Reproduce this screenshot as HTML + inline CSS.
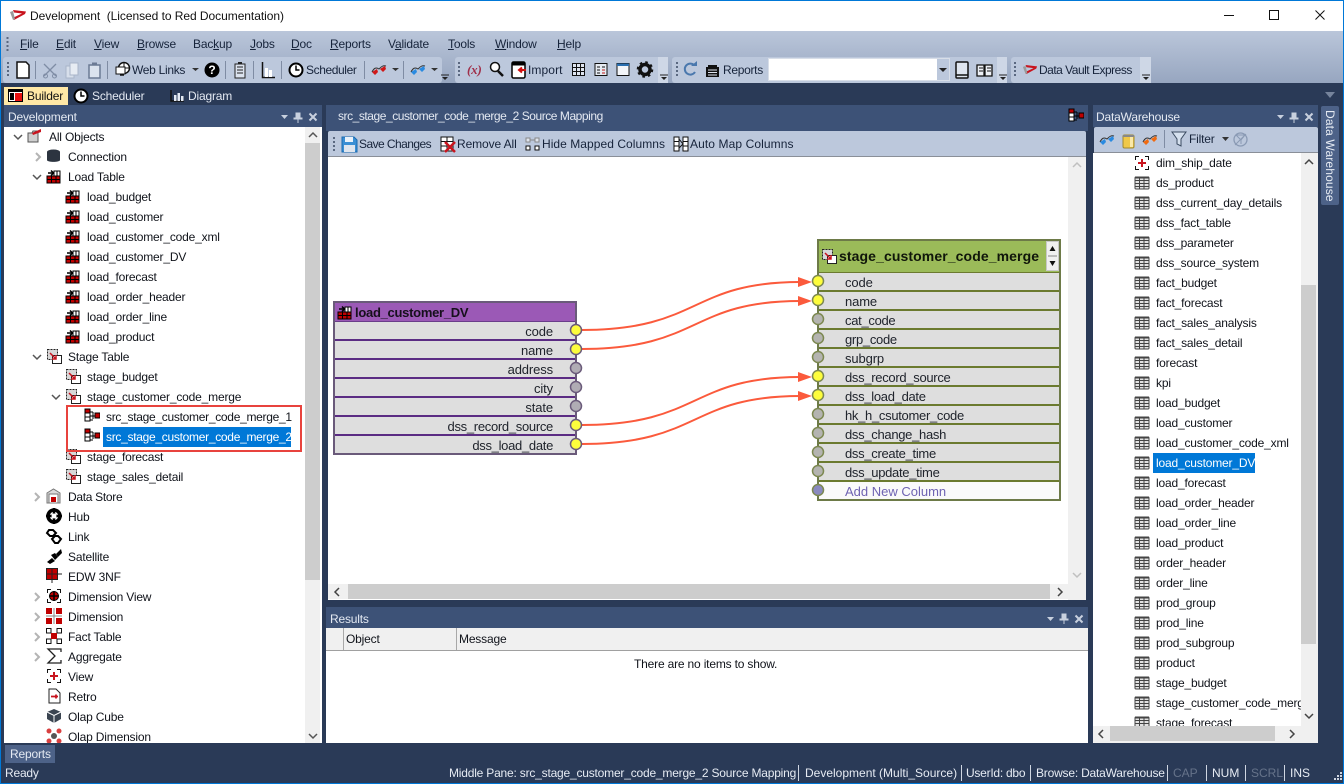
<!DOCTYPE html>
<html><head><meta charset="utf-8"><title>Development</title>
<style>
html,body{margin:0;padding:0;width:1344px;height:784px;overflow:hidden;background:#2a3a57}
body{position:relative;font:12px/20px "Liberation Sans",sans-serif;color:#10131a}
div{box-sizing:border-box}
.a{position:absolute}
.t{position:absolute;white-space:nowrap;line-height:20px;letter-spacing:-.18px}
.i{position:absolute;width:16px;height:16px;overflow:visible}
.w{color:#e4e9f2}
.m{color:#16233a}
.m u{text-decoration:underline}
.pill{position:absolute;background:#bcc8dc;border-radius:3px;top:57px;height:26px}
.st{color:#e6ebf3;top:763px;letter-spacing:-.2px}
.ss{position:absolute;top:765px;width:1px;height:16px;background:#cfd6e2}
.rt{position:absolute;white-space:nowrap;font-size:13px;line-height:19px;color:#20242c;letter-spacing:-.3px}
.p{letter-spacing:-.12px}
</style></head><body>
<svg width="0" height="0" style="position:absolute">
<defs>
<symbol id="load" viewBox="0 0 16 16"><rect x="2" y="8" width="13" height="7" fill="#c00000" stroke="#000"/><rect x="9" y="3" width="6" height="5" fill="#fff" stroke="#000"/><path d="M2 11.500H15M6.500 8V15M11 8V15M12 3V8" stroke="#000"/><path d="M3 5H8M6 2.500L8.500 5L6 7.500" fill="none" stroke="#000" stroke-width="1.500"/></symbol>
<symbol id="stage" viewBox="0 0 16 16"><rect x="1.500" y="1.500" width="10" height="10" fill="#d8d8d8" stroke="#222" stroke-dasharray="2 1"/><rect x="6.500" y="7.500" width="9" height="8" fill="#fff" stroke="#222"/><path d="M4 5L10 11M10 7V11H6" fill="none" stroke="#c8141e" stroke-width="1.500"/></symbol>
<symbol id="src" viewBox="0 0 16 16"><path d="M4 4H9M4 8H9M9 4V11M4 12H9M9 8H11" stroke="#000"/><rect x="1" y="1" width="5" height="4" fill="#c00000" stroke="#000"/><rect x="1" y="5" width="5" height="4" fill="#fff" stroke="#000"/><rect x="1" y="9" width="5" height="4" fill="#fff" stroke="#000"/><rect x="11" y="5" width="5" height="5" fill="#c00000" stroke="#000"/></symbol>
<symbol id="grid" viewBox="0 0 16 16"><rect x="1" y="2" width="14" height="12" fill="#e2e2e2" stroke="#444" rx="1"/><path d="M1 5.500H15M1 8.500H15M1 11.500H15M5.500 2V14M10 2V14" stroke="#444"/><path d="M1 2.500H15" stroke="#444" stroke-width="2"/></symbol>
<symbol id="view" viewBox="0 0 16 16"><path d="M5 1.500H1.500V5M11 1.500H14.500V5M5 14.500H1.500V11M11 14.500H14.500V11" fill="none" stroke="#111"/><path d="M8 4V12M4 8H12" stroke="#c8141e" stroke-width="2"/></symbol>
<symbol id="cv" viewBox="0 0 10 10"><path d="M1 3L5 7L9 3" fill="none" stroke="#555" stroke-width="1.500"/></symbol>
<symbol id="ch" viewBox="0 0 10 10"><path d="M3 1L7 5L3 9" fill="none" stroke="#b4b4b4" stroke-width="2"/></symbol>
<symbol id="pin" viewBox="0 0 10 12"><path d="M3 1H7V6H9V7H1V6H3ZM5 7V11" fill="#c8d0de" stroke="#c8d0de"/></symbol>
<symbol id="x" viewBox="0 0 10 10"><path d="M1.500 1.500L8.500 8.500M8.500 1.500L1.500 8.500" stroke="#c8d0de" stroke-width="2"/></symbol>
<symbol id="clock" viewBox="0 0 16 16"><circle cx="8" cy="8" r="6.500" fill="#fff" stroke="#000" stroke-width="2"/><path d="M8 3.500V8H11.500" fill="none" stroke="#000" stroke-width="1.500"/></symbol>
<symbol id="logo" viewBox="0 0 18 12"><path d="M4 1L17 2.500L16 5L5 11L3.500 9L13 4.500L5 3.500Z" fill="#c8141e"/><path d="M1 3L4 2L6 10L4 11Z" fill="#9a9a9a"/></symbol>
<symbol id="glr" viewBox="0 0 16 16"><path d="M1 10C3 6 5 5 8 7C10 5 12 3 15 4" fill="none" stroke="#333"/><path d="M1 10l5-3l1 3l-3 3zM9 7l5-3l1 3l-3 3z" fill="#d01818"/></symbol>
<symbol id="glb" viewBox="0 0 16 16"><path d="M1 10C3 6 5 5 8 7C10 5 12 3 15 4" fill="none" stroke="#333"/><path d="M1 10l5-3l1 3l-3 3zM9 7l5-3l1 3l-3 3z" fill="#2a8ae0"/></symbol>
<symbol id="glo" viewBox="0 0 16 16"><path d="M1 10C3 6 5 5 8 7C10 5 12 3 15 4" fill="none" stroke="#333"/><path d="M1 10l5-3l1 3l-3 3zM9 7l5-3l1 3l-3 3z" fill="#f06a10"/></symbol>
<symbol id="dn" viewBox="0 0 8 4"><path d="M0 0H8L4 4Z" fill="#222"/></symbol>
</defs>
</svg>

<!-- title bar -->
<div class="a" style="left:0;top:0;width:1344px;height:31px;background:#fff;border-top:1px solid #0078d7;border-left:1px solid #0078d7;border-right:1px solid #0078d7"></div>
<svg class="i" style="left:9px;top:9px;width:18px;height:12px"><use href="#logo"/></svg>
<div class="t" style="left:30px;top:6px;color:#111;letter-spacing:-.05px">Development&nbsp; (Licensed to Red Documentation)</div>
<svg class="a" style="left:1220px;top:5px" width="110" height="20"><path d="M4 10.500H14" stroke="#111"/><rect x="49.500" y="5.500" width="9" height="9" fill="none" stroke="#111"/><path d="M95.500 5.500L104.500 14.500M104.500 5.500L95.500 14.500" stroke="#111"/></svg>

<!-- chrome gradient -->
<div class="a" style="left:1px;top:31px;width:1342px;height:52px;background:linear-gradient(#bac6da,#97a6c0)"></div>
<svg class="a" style="left:6px;top:37px" width="3" height="15"><path d="M1.500 0V15" stroke="#5a6880" stroke-width="2" stroke-dasharray="2 2"/></svg>
<div class="t m" style="left:20px;top:34px"><u>F</u>ile</div>
<div class="t m" style="left:56px;top:34px"><u>E</u>dit</div>
<div class="t m" style="left:94px;top:34px"><u>V</u>iew</div>
<div class="t m" style="left:137px;top:34px"><u>B</u>rowse</div>
<div class="t m" style="left:193px;top:34px">Bac<u>k</u>up</div>
<div class="t m" style="left:250px;top:34px"><u>J</u>obs</div>
<div class="t m" style="left:291px;top:34px"><u>D</u>oc</div>
<div class="t m" style="left:330px;top:34px"><u>R</u>eports</div>
<div class="t m" style="left:388px;top:34px">V<u>a</u>lidate</div>
<div class="t m" style="left:448px;top:34px"><u>T</u>ools</div>
<div class="t m" style="left:495px;top:34px"><u>W</u>indow</div>
<div class="t m" style="left:557px;top:34px"><u>H</u>elp</div>

<!-- toolbars -->
<div class="pill" style="left:3px;width:439px"></div>
<div class="pill" style="left:455px;width:213px"></div>
<div class="a" style="left:658px;top:57px;width:10px;height:26px;background:#ced7e6"></div>
<div class="pill" style="left:672px;width:335px"></div>
<div class="a" style="left:997px;top:57px;width:10px;height:26px;background:#ced7e6"></div>
<div class="pill" style="left:1011px;width:140px"></div>
<div class="a" style="left:1140px;top:57px;width:11px;height:26px;background:#ced7e6"></div>
<svg class="a" style="left:0;top:57px" width="1344" height="26">
<path d="M8 5V21M459 5V21M677 5V21M1015 5V21" stroke="#5a6880" stroke-width="2" stroke-dasharray="2 2"/>
<path d="M441 18H449M660 18H668M999 18H1007M1142 18H1150" stroke="#222"/>
<path d="M442 20H448L445 23ZM661 20H667L664 23ZM1000 20H1006L1003 23ZM1143 20H1149L1146 23Z" fill="#222"/>
<path d="M35.500 4V22M107.500 4V22M225.500 4V22M253.500 4V22M281.500 4V22M364.500 4V22M403.500 4V22" stroke="#7f8ca3"/>
<path d="M17 5H26L29 8V21H17Z" fill="#fff" stroke="#111" stroke-width="1.500"/>
<path d="M44 7L56 19M56 7L44 19" stroke="#7f8da5" stroke-width="1.300"/><circle cx="45.500" cy="19" r="2" fill="none" stroke="#7f8da5"/><circle cx="54.500" cy="19" r="2" fill="none" stroke="#7f8da5"/>
<path d="M66 9H74V21H66Z" fill="#d7dfeb" stroke="#a9b5c9"/><path d="M70 6H78V18H70Z" fill="#e7ecf3" stroke="#a9b5c9"/>
<rect x="89" y="8" width="11" height="13" fill="#dbe3ee" stroke="#6b7a94" stroke-width="1.500"/><rect x="92" y="5.500" width="5" height="3" fill="#6b7a94"/>
<circle cx="124" cy="11" r="5.500" fill="#fff" stroke="#111" stroke-width="1.500"/><path d="M119 11H129M124 5.500V16.500" stroke="#111"/><rect x="116" y="10" width="9" height="7" fill="#fff" stroke="#111"/><path d="M120 18H124" stroke="#111" stroke-width="1.500"/>
<path d="M192 11H199L195.500 14Z" fill="#333"/>
<circle cx="212" cy="13" r="7.500" fill="#000"/>
<rect x="235" y="7" width="10" height="14" fill="#dce3ee" stroke="#222"/><path d="M237 10H243M237 13H243M237 16H243" stroke="#222"/><rect x="238" y="5" width="4" height="2" fill="#222"/>
<path d="M262.500 5V20.500H275" fill="none" stroke="#111" stroke-width="1.500"/><rect x="265" y="11" width="3" height="9" fill="#fff"/><rect x="269" y="13" width="3" height="7" fill="#fff"/>
<path d="M392 11H399L395.500 14ZM431 11H438L434.500 14Z" fill="#333"/>
<circle cx="495" cy="10" r="4.500" fill="#fff" stroke="#111" stroke-width="1.500"/><path d="M498 14L503 19" stroke="#111" stroke-width="2.500"/>
<rect x="512" y="5" width="13" height="16" rx="1.500" fill="#fff" stroke="#000" stroke-width="1.500"/><rect x="512" y="5" width="13" height="3.500" fill="#000"/><path d="M519 13H526M522 10.500L519 13L522 15.500" fill="none" stroke="#d01010" stroke-width="2"/>
<rect x="572.500" y="6.500" width="12" height="12" fill="#dfe5ef" stroke="#111"/><path d="M572 10.500H585M572 14.500H585M576.500 6V19M580.500 6V19" stroke="#111"/>
<rect x="595" y="6.500" width="12" height="12" fill="#e6ebf2" stroke="#111"/><path d="M597 10H600M597 13H600M597 16H600M602 10H605" stroke="#111"/><path d="M602 13H605M602 16H605" stroke="#c01818"/>
<rect x="617" y="6.500" width="12" height="12" fill="#f3f5f9" stroke="#111"/><rect x="617" y="6.500" width="12" height="2.500" fill="#2a6fb0"/>
<circle cx="645" cy="12.500" r="5" fill="none" stroke="#111" stroke-width="3.500"/><circle cx="645" cy="12.500" r="7" fill="none" stroke="#111" stroke-width="2.500" stroke-dasharray="2.500 3"/>
<path d="M694 8A5.500 5.500 0 1 0 695 15" fill="none" stroke="#4a78ad" stroke-width="2"/><path d="M691 9H697V4Z" fill="#4a78ad"/>
<rect x="706" y="10" width="13" height="10" fill="#111"/><path d="M708 13H717M708 15.500H717M708 18H717" stroke="#dfe5ef"/><rect x="708" y="8" width="9" height="2" fill="#111"/>
<rect x="956" y="5" width="12" height="16" rx="1" fill="#dfe5ef" stroke="#111" stroke-width="1.500"/><path d="M956 18H968" stroke="#111" stroke-width="1.500"/>
<path d="M977 8H984V19H977ZM985 8H992V19H985Z" fill="#eef1f6" stroke="#111" stroke-width="1.300"/><path d="M979 11H983M979 14H983M987 11H991M987 14H991" stroke="#111"/>
</svg>
<div class="a" style="left:208px;top:60px;width:8px;text-align:center;color:#fff;font:bold 12px/20px 'Liberation Sans',sans-serif">?</div>
<svg class="i" style="left:371px;top:62px"><use href="#glr"/></svg>
<svg class="i" style="left:410px;top:62px"><use href="#glb"/></svg>
<div class="t" style="left:467px;top:60px;color:#a0304a;font:italic bold 13px/20px 'Liberation Serif',serif">(x)</div>
<div class="t m" style="left:132px;top:60px;letter-spacing:-.3px">Web Links</div>
<div class="t m" style="left:306px;top:60px;letter-spacing:-.4px">Scheduler</div>
<svg class="i" style="left:288px;top:62px"><use href="#clock"/></svg>
<div class="t m" style="left:528px;top:60px;letter-spacing:.1px">Import</div>
<div class="t m" style="left:723px;top:60px;letter-spacing:-.3px">Reports</div>
<div class="a" style="left:768px;top:58px;width:182px;height:23px;background:#fff;border:1px solid #d8dee8"></div>
<div class="a" style="left:937px;top:59px;width:12px;height:21px;background:#bcc8dc"></div>
<svg class="a" style="left:939px;top:68px" width="8" height="4"><use href="#dn"/></svg>
<svg class="i" style="left:1022px;top:64px;width:16px;height:11px"><use href="#logo"/></svg>
<div class="t m" style="left:1039px;top:60px;letter-spacing:-.5px">Data Vault Express</div>

<!-- tab strip -->
<div class="a" style="left:4px;top:87px;width:64px;height:18px;background:#ffe8a6"></div>
<svg class="a" style="left:8px;top:89px" width="15" height="13"><rect x=".5" y=".5" width="14" height="12" fill="#fff" stroke="#000"/><rect x="0" y="0" width="15" height="3" fill="#000"/><rect x="2" y="4" width="4" height="7" fill="#000"/><rect x="7" y="4" width="7" height="8" fill="#e81010"/></svg>
<div class="t" style="left:27px;top:86px;color:#111">Builder</div>
<svg class="i" style="left:73px;top:88px"><use href="#clock"/></svg>
<div class="t w" style="left:92px;top:86px">Scheduler</div>
<svg class="a" style="left:170px;top:90px" width="14" height="12"><path d="M1 0V11H14" fill="none" stroke="#111" stroke-width="1.500"/><rect x="4" y="5" width="2.500" height="6" fill="#e4e9f2"/><rect x="7.500" y="3" width="2.500" height="8" fill="#e4e9f2"/><rect x="11" y="6" width="2.500" height="5" fill="#e4e9f2"/></svg>
<div class="t w" style="left:188px;top:86px">Diagram</div>
<svg class="a" style="left:1325px;top:92px" width="10" height="6"><path d="M0 0H10L5 6Z" fill="#76849c"/></svg>

<!-- left panel -->
<div class="a" style="left:4px;top:105px;width:318px;height:22px;background:#3d5277"></div>
<div class="t w" style="left:8px;top:107px">Development</div>
<svg class="a" style="left:281px;top:115px" width="7" height="4"><path d="M0 0H7L3.500 4Z" fill="#c8d0de"/></svg>
<svg class="a" style="left:293px;top:112px" width="10" height="12"><use href="#pin"/></svg>
<svg class="a" style="left:308px;top:112px" width="10" height="10"><use href="#x"/></svg>
<div class="a" style="left:4px;top:127px;width:318px;height:616px;background:#fff"></div>
<div class="a" style="left:305px;top:127px;width:15px;height:616px;background:#f0f0f0"></div>
<div class="a" style="left:305px;top:143px;width:15px;height:437px;background:#cdcdcd"></div>
<svg class="a" style="left:308px;top:131px" width="10" height="8"><path d="M1 6L5 2L9 6" fill="none" stroke="#555" stroke-width="1.500"/></svg>
<svg class="a" style="left:308px;top:732px" width="10" height="8"><path d="M1 2L5 6L9 2" fill="none" stroke="#555" stroke-width="1.500"/></svg>

<div class="a" style="left:0;top:127px;width:305px;height:616px;overflow:hidden">
<svg class="a" style="left:13px;top:5px" width="10" height="10"><use href="#cv"/></svg>
<svg class="i" style="left:27px;top:1px"><path d="M1 5H5L6 3H11V14H1Z" fill="#cfcfcf" stroke="#555"/><path d="M5 5L14 1V4L6 7Z" fill="#c8141e"/></svg>
<div class="t" style="left:49px;top:0">All Objects</div>

<svg class="a" style="left:33px;top:25px" width="10" height="10"><use href="#ch"/></svg>
<svg class="i" style="left:46px;top:21px"><ellipse cx="7.500" cy="4" rx="6.500" ry="2.500" fill="#2c3440"/><path d="M1 4V12C1 14.500 14 14.500 14 12V4" fill="#2c3440"/></svg>
<div class="t" style="left:68px;top:20px">Connection</div>

<svg class="a" style="left:32px;top:45px" width="10" height="10"><use href="#cv"/></svg>
<svg class="i" style="left:45px;top:41px"><use href="#load"/></svg>
<div class="t" style="left:68px;top:40px">Load Table</div>

<svg class="i" style="left:64px;top:61px"><use href="#load"/></svg><div class="t" style="left:87px;top:60px">load_budget</div>
<svg class="i" style="left:64px;top:81px"><use href="#load"/></svg><div class="t" style="left:87px;top:80px">load_customer</div>
<svg class="i" style="left:64px;top:101px"><use href="#load"/></svg><div class="t" style="left:87px;top:100px">load_customer_code_xml</div>
<svg class="i" style="left:64px;top:121px"><use href="#load"/></svg><div class="t" style="left:87px;top:120px">load_customer_DV</div>
<svg class="i" style="left:64px;top:141px"><use href="#load"/></svg><div class="t" style="left:87px;top:140px">load_forecast</div>
<svg class="i" style="left:64px;top:161px"><use href="#load"/></svg><div class="t" style="left:87px;top:160px">load_order_header</div>
<svg class="i" style="left:64px;top:181px"><use href="#load"/></svg><div class="t" style="left:87px;top:180px">load_order_line</div>
<svg class="i" style="left:64px;top:201px"><use href="#load"/></svg><div class="t" style="left:87px;top:200px">load_product</div>

<svg class="a" style="left:32px;top:225px" width="10" height="10"><use href="#cv"/></svg>
<svg class="i" style="left:46px;top:221px"><use href="#stage"/></svg>
<div class="t" style="left:68px;top:220px">Stage Table</div>
<svg class="i" style="left:65px;top:241px"><use href="#stage"/></svg><div class="t" style="left:87px;top:240px">stage_budget</div>
<svg class="a" style="left:51px;top:265px" width="10" height="10"><use href="#cv"/></svg>
<svg class="i" style="left:65px;top:261px"><use href="#stage"/></svg><div class="t" style="left:87px;top:260px">stage_customer_code_merge</div>

<svg class="i" style="left:84px;top:281px"><use href="#src"/></svg><div class="t" style="left:106px;top:280px;letter-spacing:-.29px">src_stage_customer_code_merge_1</div>
<div class="a" style="left:103px;top:300px;width:188px;height:20px;background:#0078d7"></div>
<svg class="i" style="left:84px;top:301px"><use href="#src"/></svg><div class="t" style="left:106px;top:300px;color:#fff;letter-spacing:-.29px">src_stage_customer_code_merge_2</div>

<svg class="i" style="left:65px;top:321px"><use href="#stage"/></svg><div class="t" style="left:87px;top:320px">stage_forecast</div>
<svg class="i" style="left:65px;top:341px"><use href="#stage"/></svg><div class="t" style="left:87px;top:340px">stage_sales_detail</div>

<svg class="a" style="left:32px;top:365px" width="10" height="10"><use href="#ch"/></svg>
<svg class="i" style="left:46px;top:361px"><path d="M1 5L7.500 1L14 5V15H1Z" fill="#dadada" stroke="#777"/><rect x="3" y="6" width="9" height="9" fill="#fff" stroke="#777"/><rect x="5" y="9" width="5" height="5" fill="#c00000"/></svg>
<div class="t" style="left:68px;top:360px;letter-spacing:-.3px">Data Store</div>

<svg class="i" style="left:46px;top:381px"><circle cx="8" cy="8" r="6" fill="none" stroke="#000" stroke-width="3.500"/><path d="M8 0V16M0 8H16" stroke="#000" stroke-width="2.500"/><circle cx="8" cy="8" r="2.500" fill="#fff"/></svg>
<div class="t" style="left:68px;top:380px">Hub</div>

<svg class="i" style="left:46px;top:401px"><path d="M3 2H7L10 5L7 8H4L1 5ZM9 8H12L15 11L12 15H9L6 11Z" fill="none" stroke="#000" stroke-width="2"/></svg>
<div class="t" style="left:68px;top:400px">Link</div>

<svg class="i" style="left:46px;top:421px"><path d="M1 14L6 10L9 13L4 16ZM10 6L15 1L16 5L12 9Z" fill="#000"/><path d="M5 7L9 5L12 9L9 12Z" fill="#000"/></svg>
<div class="t" style="left:68px;top:420px">Satellite</div>

<svg class="i" style="left:46px;top:441px"><rect x="0.500" y="0.500" width="11" height="11" fill="#c00000" stroke="#222"/><path d="M6 0V15M0 6H16" stroke="#222"/></svg>
<div class="t" style="left:68px;top:440px">EDW 3NF</div>

<svg class="a" style="left:32px;top:465px" width="10" height="10"><use href="#ch"/></svg>
<svg class="i" style="left:46px;top:461px"><path d="M5 1.500H1.500V5M11 1.500H14.500V5M5 14.500H1.500V11M11 14.500H14.500V11" fill="none" stroke="#111"/><circle cx="8" cy="8" r="4.500" fill="#c00000" stroke="#000"/><path d="M8 3V13M3 8H13" stroke="#000" stroke-width="1.500"/></svg>
<div class="t" style="left:68px;top:460px">Dimension View</div>

<svg class="a" style="left:32px;top:485px" width="10" height="10"><use href="#ch"/></svg>
<svg class="i" style="left:46px;top:481px"><rect x="0" y="0" width="6" height="6" fill="#c00000"/><rect x="10" y="0" width="6" height="6" fill="#c00000"/><rect x="0" y="10" width="6" height="6" fill="#c00000"/><rect x="10" y="10" width="6" height="6" fill="#c00000"/><path d="M8 0V16M0 8H16" stroke="#888"/></svg>
<div class="t" style="left:68px;top:480px">Dimension</div>

<svg class="a" style="left:32px;top:505px" width="10" height="10"><use href="#ch"/></svg>
<svg class="i" style="left:46px;top:501px"><path d="M3 3L13 13M13 3L3 13" stroke="#222"/><rect x=".5" y=".5" width="4.500" height="4.500" fill="#fff" stroke="#111"/><rect x="11" y=".5" width="4.500" height="4.500" fill="#fff" stroke="#111"/><rect x=".5" y="11" width="4.500" height="4.500" fill="#fff" stroke="#111"/><rect x="11" y="11" width="4.500" height="4.500" fill="#fff" stroke="#111"/><rect x="5" y="5" width="6" height="6" fill="#c00000"/></svg>
<div class="t" style="left:68px;top:500px">Fact Table</div>

<svg class="a" style="left:32px;top:525px" width="10" height="10"><use href="#ch"/></svg>
<svg class="i" style="left:47px;top:521px"><path d="M14 4V1H1L8 8L1 15H14V12" fill="none" stroke="#222" stroke-width="1.300"/></svg>
<div class="t" style="left:68px;top:520px">Aggregate</div>

<svg class="i" style="left:46px;top:541px"><use href="#view"/></svg>
<div class="t" style="left:68px;top:540px">View</div>

<svg class="i" style="left:46px;top:561px"><path d="M3 1H10L14 5V15H3Z" fill="#fff" stroke="#222"/><path d="M5 8.500H12M10 6.500V10.500" stroke="#c8141e" stroke-width="1.800"/></svg>
<div class="t" style="left:68px;top:560px">Retro</div>

<svg class="i" style="left:46px;top:581px"><path d="M8 1L15 4V11L8 15L1 11V4Z" fill="#3a4450"/><path d="M1 4L8 7.500L15 4M8 7.500V15" fill="none" stroke="#fff"/></svg>
<div class="t" style="left:68px;top:580px">Olap Cube</div>

<svg class="i" style="left:46px;top:601px"><circle cx="3" cy="3" r="2.500" fill="#d84040"/><circle cx="13" cy="3" r="2.500" fill="#d84040"/><circle cx="3" cy="13" r="2.500" fill="#d84040"/><circle cx="13" cy="13" r="2.500" fill="#d84040"/><circle cx="8" cy="8" r="3" fill="#555"/></svg>
<div class="t" style="left:68px;top:600px">Olap Dimension</div>
</div>
<div class="a" style="left:66px;top:405px;width:236px;height:47px;border:2px solid #e8433d"></div>

<!-- middle panel -->
<div class="a" style="left:326px;top:105px;width:762px;height:26px;background:#3d5277"></div>
<div class="t w" style="left:338px;top:106px;letter-spacing:-.45px">src_stage_customer_code_merge_2 Source Mapping</div>
<svg class="i" style="left:1068px;top:108px"><use href="#src"/></svg>
<div class="a" style="left:328px;top:131px;width:758px;height:26px;background:#bcc8dc;border-bottom:1px solid #8a8f98;border-radius:2px 2px 0 0"></div>
<svg class="a" style="left:332px;top:136px" width="480" height="17">
<path d="M2 1V16" stroke="#5a6880" stroke-width="2" stroke-dasharray="2 2"/>
<path d="M10 1H22L25 4V16H10Z" fill="#3b8fd4" stroke="#1a6ab0"/><rect x="13" y="1" width="8" height="5" fill="#eaf2fa"/><rect x="12" y="9" width="11" height="7" fill="#dfe5ee"/>
<rect x="109" y="1" width="12" height="14" fill="#fff" stroke="#111"/><path d="M109 5.500H121M109 10H121M115 1V15" stroke="#111"/><path d="M113 6L123 16M123 6L113 16" stroke="#c8141e" stroke-width="2.500"/>
<rect x="194" y="2" width="4" height="4" fill="#dfe5ee" stroke="#888"/><rect x="203" y="2" width="4" height="4" fill="#dfe5ee" stroke="#888"/><path d="M198 4H203" stroke="#888"/><rect x="194" y="10" width="4" height="4" fill="#fff" stroke="#111"/><rect x="203" y="10" width="4" height="4" fill="#fff" stroke="#111"/>
<rect x="342" y="1" width="5" height="14" fill="#fff" stroke="#111"/><rect x="351" y="1" width="5" height="14" fill="#fff" stroke="#111"/><path d="M342 5.500H347M342 10H347M351 5.500H356M351 10H356M347 3L351 8M347 12L351 8" stroke="#111"/>
</svg>
<div class="t m" style="left:359px;top:134px;letter-spacing:-.55px">Save Changes</div>
<div class="t m" style="left:457px;top:134px;letter-spacing:-.1px">Remove All</div>
<div class="t m" style="left:542px;top:134px;letter-spacing:.05px">Hide Mapped Columns</div>
<div class="t m" style="left:690px;top:134px;letter-spacing:.1px">Auto Map Columns</div>

<div class="a" style="left:328px;top:157px;width:758px;height:443px;background:#fff"></div>
<div class="a" style="left:1068px;top:157px;width:18px;height:443px;background:#f0f0f0"></div>
<svg class="a" style="left:1072px;top:161px" width="10" height="8"><path d="M1 6L5 2L9 6" fill="none" stroke="#c0c0c0" stroke-width="1.500"/></svg>
<svg class="a" style="left:1072px;top:571px" width="10" height="8"><path d="M1 2L5 6L9 2" fill="none" stroke="#c0c0c0" stroke-width="1.500"/></svg>
<div class="a" style="left:328px;top:584px;width:758px;height:15px;background:#f0f0f0"></div>
<div class="a" style="left:348px;top:584px;width:702px;height:15px;background:#cdcdcd"></div>
<svg class="a" style="left:333px;top:587px" width="8" height="10"><path d="M6 1L2 5L6 9" fill="none" stroke="#444" stroke-width="1.500"/></svg>
<svg class="a" style="left:1056px;top:587px" width="8" height="10"><path d="M2 1L6 5L2 9" fill="none" stroke="#444" stroke-width="1.500"/></svg>

<!-- left table -->
<div class="a" style="left:333px;top:301px;width:244px;height:154px;background:#dedede;border:2px solid #6a5a7a"></div>
<div class="a" style="left:335px;top:303px;width:240px;height:18px;background:#9b59b6"></div>
<svg class="i" style="left:336px;top:304px"><use href="#load"/></svg>
<div class="t" style="left:355px;top:303px;font-size:13px;font-weight:bold;line-height:20px;color:#16101c;letter-spacing:-.28px">load_customer_DV</div>
<div class="a" style="left:335px;top:321px;width:240px;height:1px;background:#6a3d8a"></div>
<div class="a" style="left:335px;top:339px;width:240px;height:2px;background:#5b2c83"></div>
<div class="a" style="left:335px;top:358px;width:240px;height:2px;background:#5b2c83"></div>
<div class="a" style="left:335px;top:377px;width:240px;height:2px;background:#5b2c83"></div>
<div class="a" style="left:335px;top:396px;width:240px;height:2px;background:#5b2c83"></div>
<div class="a" style="left:335px;top:415px;width:240px;height:2px;background:#5b2c83"></div>
<div class="a" style="left:335px;top:434px;width:240px;height:2px;background:#5b2c83"></div>
<div class="rt p" style="right:791px;top:322px">code</div>
<div class="rt p" style="right:791px;top:341px">name</div>
<div class="rt p" style="right:791px;top:360px">address</div>
<div class="rt p" style="right:791px;top:379px">city</div>
<div class="rt p" style="right:791px;top:398px">state</div>
<div class="rt" style="right:791px;top:417px">dss_record_source</div>
<div class="rt" style="right:791px;top:436px">dss_load_date</div>

<!-- right table -->
<div class="a" style="left:817px;top:239px;width:244px;height:262px;background:#dedede;border:2px solid #6d7a48"></div>
<div class="a" style="left:819px;top:241px;width:240px;height:31px;background:#9bbb59"></div>
<svg class="i" style="left:821px;top:248px"><use href="#stage"/></svg>
<div class="t" style="left:839px;top:246px;font-size:14px;font-weight:bold;color:#10160a;letter-spacing:.1px">stage_customer_code_merge</div>
<div class="a" style="left:1046px;top:241px;width:13px;height:30px;background:#f0f0f0;border:1px solid #c8c8c8"></div>
<svg class="a" style="left:1048px;top:243px" width="9" height="26"><path d="M4.500 3L7.500 8H1.500Z" fill="#111"/><path d="M0 13H9" stroke="#888"/><path d="M4.500 23L7.500 18H1.500Z" fill="#111"/></svg>
<div class="a" style="left:819px;top:272px;width:240px;height:1px;background:#6b7a2f"></div>
<div class="a" style="left:819px;top:290px;width:240px;height:2px;background:#6b7a2f"></div>
<div class="a" style="left:819px;top:309px;width:240px;height:2px;background:#6b7a2f"></div>
<div class="a" style="left:819px;top:328px;width:240px;height:2px;background:#6b7a2f"></div>
<div class="a" style="left:819px;top:347px;width:240px;height:2px;background:#6b7a2f"></div>
<div class="a" style="left:819px;top:366px;width:240px;height:2px;background:#6b7a2f"></div>
<div class="a" style="left:819px;top:385px;width:240px;height:2px;background:#6b7a2f"></div>
<div class="a" style="left:819px;top:404px;width:240px;height:2px;background:#6b7a2f"></div>
<div class="a" style="left:819px;top:423px;width:240px;height:2px;background:#6b7a2f"></div>
<div class="a" style="left:819px;top:442px;width:240px;height:2px;background:#6b7a2f"></div>
<div class="a" style="left:819px;top:461px;width:240px;height:2px;background:#6b7a2f"></div>
<div class="a" style="left:819px;top:480px;width:240px;height:2px;background:#6b7a2f"></div>
<div class="a" style="left:819px;top:482px;width:240px;height:17px;background:#fafafa"></div>
<div class="rt p" style="left:845px;top:273px">code</div>
<div class="rt p" style="left:845px;top:292px">name</div>
<div class="rt" style="left:845px;top:311px">cat_code</div>
<div class="rt" style="left:845px;top:330px">grp_code</div>
<div class="rt p" style="left:845px;top:349px">subgrp</div>
<div class="rt" style="left:845px;top:368px">dss_record_source</div>
<div class="rt" style="left:845px;top:387px">dss_load_date</div>
<div class="rt" style="left:845px;top:406px">hk_h_csutomer_code</div>
<div class="rt" style="left:845px;top:425px">dss_change_hash</div>
<div class="rt" style="left:845px;top:444px">dss_create_time</div>
<div class="rt" style="left:845px;top:463px">dss_update_time</div>
<div class="rt" style="left:845px;top:482px;color:#6f63b3;letter-spacing:0">Add New Column</div>

<!-- connectors -->
<svg class="a" style="left:0;top:0;pointer-events:none" width="1344" height="784">
<g fill="none" stroke="#fb5a3c" stroke-width="2">
<path d="M582 330C700 330 690 282 800 282"/>
<path d="M582 349C700 349 690 301 800 301"/>
<path d="M582 425C700 425 690 377 800 377"/>
<path d="M582 444C700 444 690 396 800 396"/>
</g>
<g fill="#fb5a3c"><path d="M798 277L812 282L798 287Z"/><path d="M798 296L812 301L798 306Z"/><path d="M798 372L812 377L798 382Z"/><path d="M798 391L812 396L798 401Z"/></g>
<g stroke-width="1.500">
<g fill="#fdfd3c" stroke="#6a5a7a"><circle cx="576" cy="330" r="5.500"/><circle cx="576" cy="349" r="5.500"/><circle cx="576" cy="425" r="5.500"/><circle cx="576" cy="444" r="5.500"/></g>
<g fill="#b0acb4" stroke="#6a5a7a"><circle cx="576" cy="368" r="5.500"/><circle cx="576" cy="387" r="5.500"/><circle cx="576" cy="406" r="5.500"/></g>
<g fill="#fdfd3c" stroke="#7c8850"><circle cx="818" cy="281" r="5.500"/><circle cx="818" cy="300" r="5.500"/><circle cx="818" cy="376" r="5.500"/><circle cx="818" cy="395" r="5.500"/></g>
<g fill="#b4b4b0" stroke="#7c8850"><circle cx="818" cy="319" r="5.500"/><circle cx="818" cy="338" r="5.500"/><circle cx="818" cy="357" r="5.500"/><circle cx="818" cy="414" r="5.500"/><circle cx="818" cy="433" r="5.500"/><circle cx="818" cy="452" r="5.500"/><circle cx="818" cy="471" r="5.500"/></g>
<circle cx="818" cy="490" r="5.500" fill="#8a8ac0" stroke="#7c8850"/>
</g>
</svg>

<!-- results -->
<div class="a" style="left:326px;top:607px;width:762px;height:21px;background:#3d5277"></div>
<div class="t w" style="left:330px;top:609px">Results</div>
<svg class="a" style="left:1047px;top:617px" width="7" height="4"><path d="M0 0H7L3.500 4Z" fill="#c8d0de"/></svg>
<svg class="a" style="left:1059px;top:613px" width="10" height="12"><use href="#pin"/></svg>
<svg class="a" style="left:1074px;top:614px" width="10" height="10"><use href="#x"/></svg>
<div class="a" style="left:326px;top:628px;width:762px;height:115px;background:#fff"></div>
<div class="a" style="left:326px;top:628px;width:762px;height:23px;background:#f0f0f0;border-bottom:1px solid #a0a0a0"></div>
<div class="a" style="left:343px;top:628px;width:1px;height:22px;background:#a8a8a8"></div>
<div class="a" style="left:456px;top:628px;width:1px;height:22px;background:#a8a8a8"></div>
<div class="t" style="left:346px;top:629px">Object</div>
<div class="t" style="left:459px;top:629px">Message</div>
<div class="t" style="left:634px;top:654px">There are no items to show.</div>

<!-- right panel -->
<div class="a" style="left:1093px;top:105px;width:225px;height:22px;background:#3d5277"></div>
<div class="t w" style="left:1096px;top:107px">DataWarehouse</div>
<svg class="a" style="left:1277px;top:115px" width="7" height="4"><path d="M0 0H7L3.500 4Z" fill="#c8d0de"/></svg>
<svg class="a" style="left:1289px;top:112px" width="10" height="12"><use href="#pin"/></svg>
<svg class="a" style="left:1304px;top:112px" width="10" height="10"><use href="#x"/></svg>
<div class="a" style="left:1094px;top:127px;width:224px;height:26px;background:#bcc8dc;border-bottom:1px solid #8a8f98;border-radius:2px 2px 0 0"></div>
<svg class="i" style="left:1099px;top:132px"><use href="#glb"/></svg>
<svg class="i" style="left:1121px;top:133px;width:14px"><rect x="2" y="2" width="11" height="13" rx="1.500" fill="#f0c848" stroke="#a08830"/><path d="M2 3H13" stroke="#888" stroke-width="2"/><rect x="9" y="4" width="3" height="10" fill="#fbe9a8"/></svg>
<svg class="i" style="left:1142px;top:132px"><use href="#glo"/></svg>
<div class="a" style="left:1164px;top:130px;width:1px;height:18px;background:#7f8ca3"></div>
<svg class="i" style="left:1171px;top:131px"><path d="M1 1H15L10 8V15L6 13V8Z" fill="#d5e0ee" stroke="#3a4a60"/></svg>
<div class="t m" style="left:1189px;top:129px">Filter</div>
<svg class="a" style="left:1222px;top:137px" width="7" height="4"><path d="M0 0H7L3.500 4Z" fill="#333"/></svg>
<svg class="i" style="left:1233px;top:132px"><circle cx="7.500" cy="7.500" r="6.500" fill="none" stroke="#8a9ab4" stroke-width="1.300"/><path d="M3 3H12L8 8V12M8 8L3 3M2 13L13 2" fill="none" stroke="#8a9ab4"/></svg>

<div class="a" style="left:1093px;top:153px;width:225px;height:590px;background:#fff"></div>
<div class="a" style="left:1301px;top:153px;width:17px;height:573px;background:#f0f0f0"></div>
<div class="a" style="left:1301px;top:285px;width:15px;height:359px;background:#cdcdcd"></div>
<svg class="a" style="left:1304px;top:158px" width="10" height="8"><path d="M1 6L5 2L9 6" fill="none" stroke="#444" stroke-width="1.500"/></svg>
<svg class="a" style="left:1304px;top:712px" width="10" height="8"><path d="M1 2L5 6L9 2" fill="none" stroke="#444" stroke-width="1.500"/></svg>
<div class="a" style="left:1093px;top:726px;width:225px;height:17px;background:#f0f0f0"></div>
<div class="a" style="left:1110px;top:726px;width:165px;height:15px;background:#cdcdcd"></div>
<svg class="a" style="left:1097px;top:729px" width="8" height="10"><path d="M6 1L2 5L6 9" fill="none" stroke="#444" stroke-width="1.500"/></svg>
<svg class="a" style="left:1288px;top:729px" width="8" height="10"><path d="M2 1L6 5L2 9" fill="none" stroke="#444" stroke-width="1.500"/></svg>

<div class="a" style="left:1093px;top:153px;width:208px;height:573px;overflow:hidden">
<div class="a" style="left:60px;top:300px;width:102px;height:20px;background:#0078d7"></div>
<svg class="i" style="left:41px;top:2px"><use href="#view"/></svg><div class="t" style="left:63px;top:0">dim_ship_date</div>
<svg class="i" style="left:41px;top:22px"><use href="#grid"/></svg><div class="t" style="left:63px;top:20px">ds_product</div>
<svg class="i" style="left:41px;top:42px"><use href="#grid"/></svg><div class="t" style="left:63px;top:40px">dss_current_day_details</div>
<svg class="i" style="left:41px;top:62px"><use href="#grid"/></svg><div class="t" style="left:63px;top:60px">dss_fact_table</div>
<svg class="i" style="left:41px;top:82px"><use href="#grid"/></svg><div class="t" style="left:63px;top:80px">dss_parameter</div>
<svg class="i" style="left:41px;top:102px"><use href="#grid"/></svg><div class="t" style="left:63px;top:100px">dss_source_system</div>
<svg class="i" style="left:41px;top:122px"><use href="#grid"/></svg><div class="t" style="left:63px;top:120px">fact_budget</div>
<svg class="i" style="left:41px;top:142px"><use href="#grid"/></svg><div class="t" style="left:63px;top:140px">fact_forecast</div>
<svg class="i" style="left:41px;top:162px"><use href="#grid"/></svg><div class="t" style="left:63px;top:160px">fact_sales_analysis</div>
<svg class="i" style="left:41px;top:182px"><use href="#grid"/></svg><div class="t" style="left:63px;top:180px">fact_sales_detail</div>
<svg class="i" style="left:41px;top:202px"><use href="#grid"/></svg><div class="t" style="left:63px;top:200px">forecast</div>
<svg class="i" style="left:41px;top:222px"><use href="#grid"/></svg><div class="t" style="left:63px;top:220px">kpi</div>
<svg class="i" style="left:41px;top:242px"><use href="#grid"/></svg><div class="t" style="left:63px;top:240px">load_budget</div>
<svg class="i" style="left:41px;top:262px"><use href="#grid"/></svg><div class="t" style="left:63px;top:260px">load_customer</div>
<svg class="i" style="left:41px;top:282px"><use href="#grid"/></svg><div class="t" style="left:63px;top:280px">load_customer_code_xml</div>
<svg class="i" style="left:41px;top:302px"><use href="#grid"/></svg><div class="t" style="left:63px;top:300px;color:#fff">load_customer_DV</div>
<svg class="i" style="left:41px;top:322px"><use href="#grid"/></svg><div class="t" style="left:63px;top:320px">load_forecast</div>
<svg class="i" style="left:41px;top:342px"><use href="#grid"/></svg><div class="t" style="left:63px;top:340px">load_order_header</div>
<svg class="i" style="left:41px;top:362px"><use href="#grid"/></svg><div class="t" style="left:63px;top:360px">load_order_line</div>
<svg class="i" style="left:41px;top:382px"><use href="#grid"/></svg><div class="t" style="left:63px;top:380px">load_product</div>
<svg class="i" style="left:41px;top:402px"><use href="#grid"/></svg><div class="t" style="left:63px;top:400px">order_header</div>
<svg class="i" style="left:41px;top:422px"><use href="#grid"/></svg><div class="t" style="left:63px;top:420px">order_line</div>
<svg class="i" style="left:41px;top:442px"><use href="#grid"/></svg><div class="t" style="left:63px;top:440px">prod_group</div>
<svg class="i" style="left:41px;top:462px"><use href="#grid"/></svg><div class="t" style="left:63px;top:460px">prod_line</div>
<svg class="i" style="left:41px;top:482px"><use href="#grid"/></svg><div class="t" style="left:63px;top:480px">prod_subgroup</div>
<svg class="i" style="left:41px;top:502px"><use href="#grid"/></svg><div class="t" style="left:63px;top:500px">product</div>
<svg class="i" style="left:41px;top:522px"><use href="#grid"/></svg><div class="t" style="left:63px;top:520px">stage_budget</div>
<svg class="i" style="left:41px;top:542px"><use href="#grid"/></svg><div class="t" style="left:63px;top:540px">stage_customer_code_merge</div>
<svg class="i" style="left:41px;top:562px"><use href="#grid"/></svg><div class="t" style="left:63px;top:560px">stage_forecast</div>
</div>

<!-- vertical tab -->
<div class="a" style="left:1321px;top:106px;width:18px;height:99px;background:#4d6288;border-radius:2px"></div>
<div class="t" style="left:1321px;top:110px;color:#e6ebf3;writing-mode:vertical-rl;line-height:18px;width:18px;letter-spacing:.15px">Data Warehouse</div>

<!-- bottom -->
<div class="a" style="left:5px;top:745px;width:50px;height:18px;background:#4d6288"></div>
<div class="t w" style="left:10px;top:744px">Reports</div>
<div class="t st" style="left:5px">Ready</div>
<div class="t st" style="left:449px">Middle Pane: src_stage_customer_code_merge_2 Source Mapping</div>
<div class="ss" style="left:798px"></div>
<div class="t st" style="left:805px;letter-spacing:0">Development (Multi_Source)</div>
<div class="ss" style="left:961px"></div>
<div class="t st" style="left:966px;letter-spacing:-.25px">UserId: dbo</div>
<div class="ss" style="left:1030px"></div>
<div class="t st" style="left:1036px">Browse: DataWarehouse</div>
<div class="ss" style="left:1167px"></div>
<div class="t st" style="left:1173px;color:#66738a;letter-spacing:0">CAP</div>
<div class="ss" style="left:1206px"></div>
<div class="t st" style="left:1212px;letter-spacing:0">NUM</div>
<div class="ss" style="left:1245px"></div>
<div class="t st" style="left:1251px;color:#66738a;letter-spacing:0">SCRL</div>
<div class="ss" style="left:1284px"></div>
<div class="t st" style="left:1290px;letter-spacing:0">INS</div>
<svg class="a" style="left:1332px;top:771px" width="10" height="10"><path d="M8 1h2v2h-2zM5 4h2v2h-2zM8 4h2v2h-2zM2 7h2v2h-2zM5 7h2v2h-2zM8 7h2v2h-2z" fill="#cfd6e2"/></svg>

<!-- window border -->
<div class="a" style="left:0;top:0;width:1px;height:784px;background:#0078d7"></div>
<div class="a" style="right:0;top:0;width:1px;height:784px;background:#0078d7"></div>
<div class="a" style="left:0;top:783px;width:1344px;height:1px;background:#0078d7"></div>
</body></html>
